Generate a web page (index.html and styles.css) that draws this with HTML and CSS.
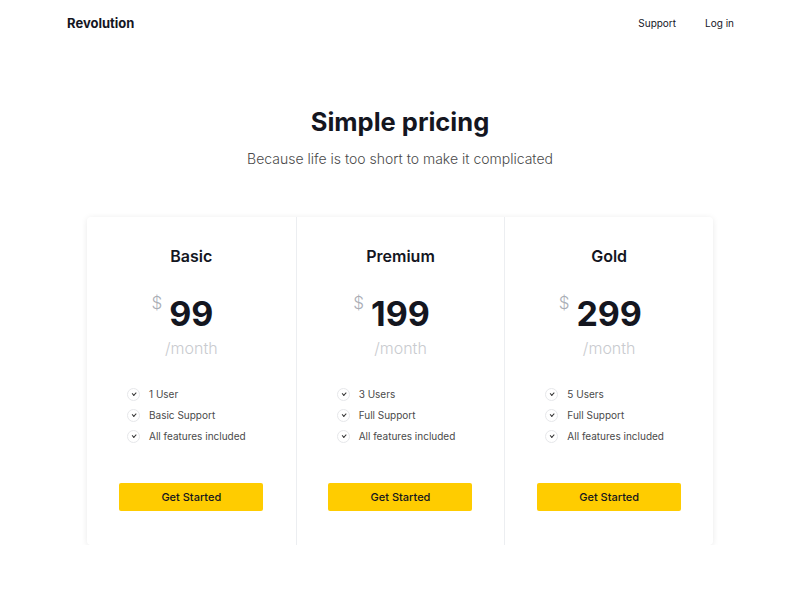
FILE: index.html
```html
<!DOCTYPE html>
<html lang="en">
<head>
    <meta charset="UTF-8">
    <meta name="viewport" content="width=device-width, initial-scale=1.0">
    <title>Revolution - Pricing</title>
    <link rel="stylesheet" href="styles.css">
</head>
<body>

    <header class="topbar">
        <a class="brand" href="#">Revolution</a>
        <nav class="nav">
            <a href="#">Support</a>
            <a href="#">Log in</a>
        </nav>
    </header>

    <section class="hero">
        <h1>Simple pricing</h1>
        <p>Because life is too short to make it complicated</p>
    </section>

    <div class="plans">
        <div class="plan">
            <h2>Basic</h2>
            <div class="price"><span class="currency">$</span>99</div>
            <div class="period">/month</div>
            <ul class="features">
                <li><span class="check"></span>1 User</li>
                <li><span class="check"></span>Basic Support</li>
                <li><span class="check"></span>All features included</li>
            </ul>
            <button class="cta">Get Started</button>
        </div>

        <div class="plan">
            <h2>Premium</h2>
            <div class="price"><span class="currency">$</span>199</div>
            <div class="period">/month</div>
            <ul class="features">
                <li><span class="check"></span>3 Users</li>
                <li><span class="check"></span>Full Support</li>
                <li><span class="check"></span>All features included</li>
            </ul>
            <button class="cta">Get Started</button>
        </div>

        <div class="plan">
            <h2>Gold</h2>
            <div class="price"><span class="currency">$</span>299</div>
            <div class="period">/month</div>
            <ul class="features">
                <li><span class="check"></span>5 Users</li>
                <li><span class="check"></span>Full Support</li>
                <li><span class="check"></span>All features included</li>
            </ul>
            <button class="cta">Get Started</button>
        </div>
    </div>

</body>
</html>
```

FILE: styles.css
```css
/* Base */
body {
    font-family: Inter, "Noto Sans", sans-serif;
    color: #14161f;
    background: #fff;
    margin: 0;
    padding: 0;
}

a {
    color: inherit;
    text-decoration: none;
}

/* Top bar */
.topbar {
    display: flex;
    justify-content: space-between;
    align-items: center;
    height: 46px;
    padding: 0 66px 0 67px;
}

.brand {
    font-size: 13px;
    font-weight: 700;
}

.nav {
    display: flex;
    gap: 29px;
}

.nav a {
    font-size: 10px;
}

/* Heading */
.hero {
    text-align: center;
    padding-top: 59px;
}

.hero h1 {
    font-size: 25.5px;
    font-weight: 700;
    margin: 0;
    line-height: 34px;
}

.hero p {
    font-size: 14px;
    font-weight: 300;
    color: #4a4a4a;
    margin: 11px 0 0;
    line-height: 18px;
}

/* Plans card */
.plans {
    display: grid;
    grid-template-columns: repeat(3, 1fr);
    width: 626px;
    margin: 49px auto 0;
    border-radius: 4px;
    box-shadow: 0 1px 6px rgba(0, 0, 0, 0.09);
    background: #fff;
}

.plan {
    display: flex;
    flex-direction: column;
    align-items: center;
    padding: 28px 0 34px;
    border-left: 1px solid #eceef1;
}

.plan:first-child {
    border-left: none;
}

.plan h2 {
    font-size: 16px;
    font-weight: 600;
    margin: 0;
    line-height: 22px;
}

.price {
    position: relative;
    font-size: 34px;
    font-weight: 700;
    line-height: 40px;
    margin-top: 27px;
}

.currency {
    position: absolute;
    right: 100%;
    top: -1px;
    margin-right: 7px;
    font-size: 17px;
    font-weight: 300;
    color: #a9adb5;
    line-height: 20px;
}

.period {
    font-size: 16px;
    font-weight: 300;
    color: #c9cbcf;
    line-height: 20px;
    margin-top: 4px;
}

/* Feature list */
.features {
    list-style: none;
    align-self: stretch;
    margin: 26px 0 0;
    padding: 0 0 0 40px;
}

.features li {
    display: flex;
    align-items: center;
    gap: 9px;
    font-size: 10px;
    color: #4a4a4a;
    line-height: 21px;
}

.check {
    position: relative;
    width: 11px;
    height: 11px;
    border: 1px solid #e6e7ea;
    border-radius: 50%;
}

.check::after {
    content: "";
    position: absolute;
    left: 4px;
    top: 3px;
    width: 3px;
    height: 1.5px;
    border-left: 1px solid #333;
    border-bottom: 1px solid #333;
    transform: rotate(-45deg);
}

/* Button */
.cta {
    margin-top: 36px;
    width: 144px;
    height: 28px;
    border: none;
    border-radius: 2px;
    background: #ffcc00;
    color: #14161f;
    font-family: inherit;
    font-size: 11px;
    font-weight: 500;
    cursor: pointer;
}

.cta:hover {
    background: #f5c200;
}
```
